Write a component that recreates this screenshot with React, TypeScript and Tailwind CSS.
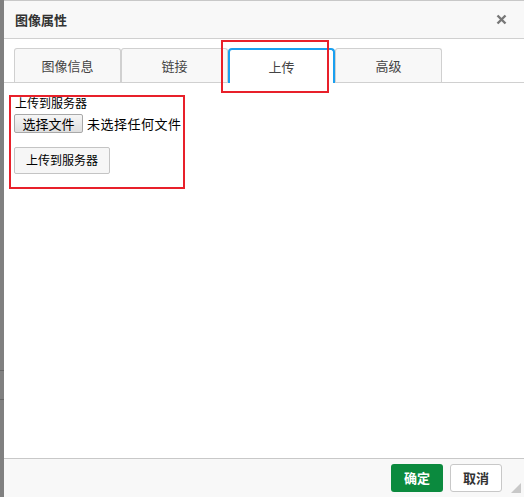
import React from "react";

const font = { fontFamily: '"Noto Sans CJK SC", "Noto Sans", sans-serif' };

export default function App() {
  const tabs = ["图像信息", "链接", "上传", "高级"];
  return (
    <div className="w-[524px] h-[497px] flex bg-white overflow-hidden relative" style={font}>
      <div className="w-[4px] h-full bg-[#808080] flex flex-col">
        <div className="h-[370px]" />
        <div className="h-[1px] bg-[#666]" />
        <div className="h-[28px]" />
        <div className="h-[1px] bg-[#666]" />
      </div>
      <div className="flex-1 flex flex-col border-t border-[#c8c8c8]">
        <div className="h-[38px] bg-[#f8f8f8] border-b border-[#d0d0d0] flex items-center justify-between pl-[11px] pr-[17px]">
          <span className="text-[13px] font-bold text-[#333]">图像属性</span>
          <svg width="11" height="11" viewBox="0 0 11 11">
            <path d="M1.5 1.5 L9.5 9.5 M9.5 1.5 L1.5 9.5" stroke="#777" strokeWidth="2.4" />
          </svg>
        </div>
        <div className="flex-1 bg-white flex flex-col">
          <div className="pt-[9px] pl-[10px] border-b border-[#d0d0d0] flex h-[44px]">
            {tabs.map((t, i) =>
              i === 2 ? (
                <div
                  key={t}
                  className="w-[107px] h-[35px] -mb-px bg-white border-2 border-b-0 border-[#1aa0f0] rounded-t-[4px] flex items-center justify-center text-[13px] text-[#444]"
                >
                  {t}
                </div>
              ) : (
                <div
                  key={t}
                  className="w-[107px] h-[34px] bg-[#f8f8f8] border border-b-0 border-[#d0d0d0] rounded-t-[3px] flex items-center justify-center text-[13px] text-[#444]"
                >
                  {t}
                </div>
              )
            )}
          </div>
          <div className="pl-[11px] pt-[12px] text-black">
            <div className="text-[12px] leading-[16px]">上传到服务器</div>
            <div className="flex items-center mt-[3px] gap-[4px]">
              <div className="h-[19px] w-[69px] -ml-px border border-[#a8a8a8] rounded-[2px] bg-gradient-to-b from-[#f6f6f6] to-[#dedede] flex items-center justify-center text-[13px] leading-none">
                选择文件
              </div>
              <span className="text-[13px] tracking-[0.5px]">未选择任何文件</span>
            </div>
            <div className="mt-[13px] -ml-px h-[27px] w-[96px] border border-[#c4c4c4] rounded-[2px] bg-[#f6f6f6] flex items-center justify-center text-[12px]">
              上传到服务器
            </div>
          </div>
        </div>
        <div className="h-[39px] bg-[#f8f8f8] border-t border-[#c8c8c8] flex items-center justify-end pr-[22px] gap-[7px] relative">
          <div className="w-[52px] h-[28px] rounded-[3px] bg-[#0b8a3e] text-white font-bold text-[13px] flex items-center justify-center">
            确定
          </div>
          <div className="w-[52px] h-[28px] rounded-[3px] bg-white border border-[#c8c8c8] text-[#333] font-bold text-[13px] flex items-center justify-center">
            取消
          </div>
          <svg className="absolute right-[3px] bottom-[4px]" width="10" height="10" viewBox="0 0 10 10">
            <path d="M10 0 L10 10 L0 10 Z" fill="#c8c8c8" />
          </svg>
        </div>
      </div>
      <div className="absolute left-[221px] top-[40px] w-[108px] h-[53px] border-2 border-[#e8202a]" />
      <div className="absolute left-[9px] top-[95px] w-[176px] h-[94px] border-2 border-[#e8202a]" />
    </div>
  );
}
